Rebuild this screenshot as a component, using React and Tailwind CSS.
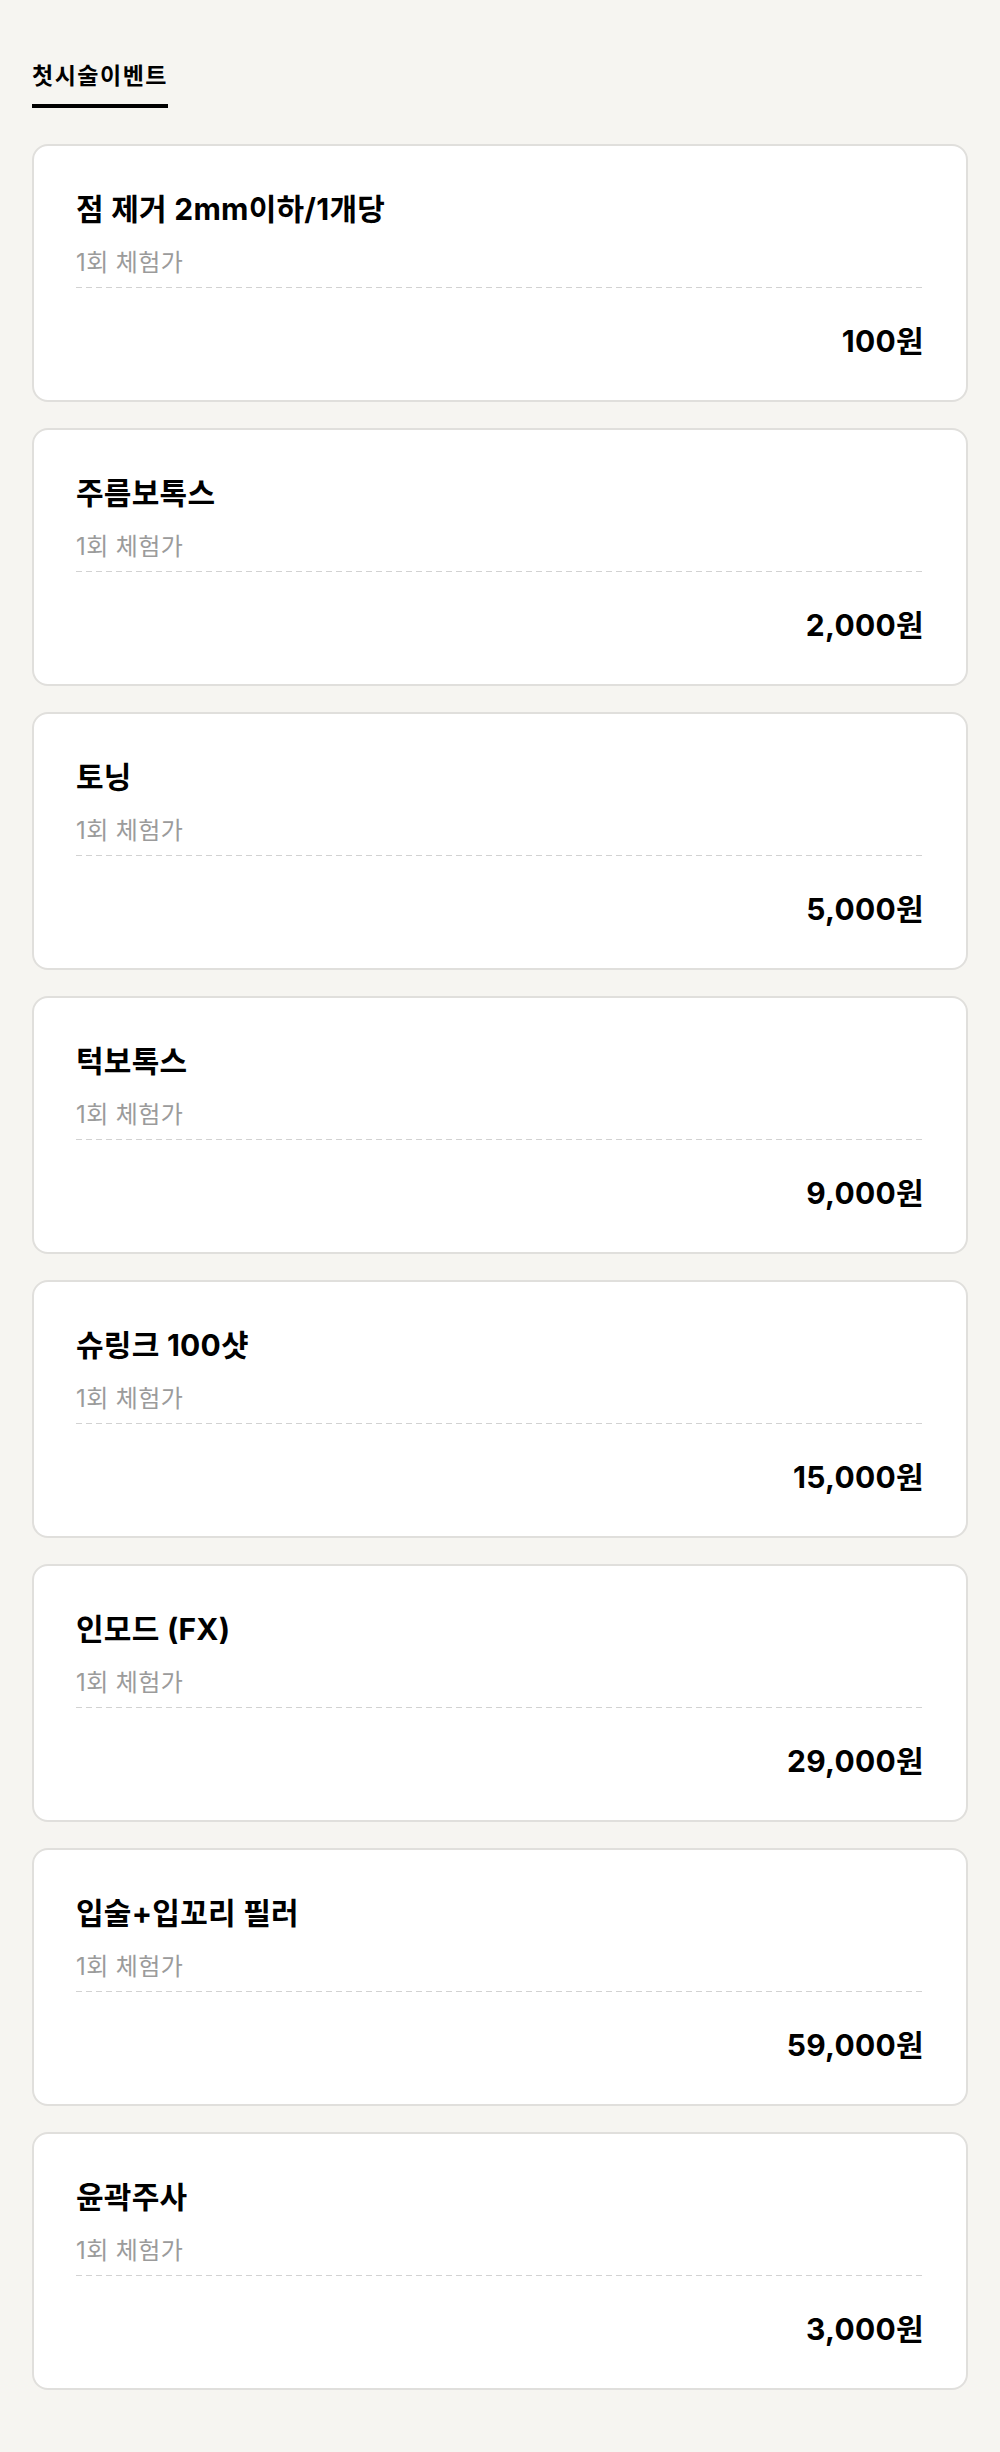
import React from "react";

const items = [
  { title: "점 제거 2mm이하/1개당", price: "100원" },
  { title: "주름보톡스", price: "2,000원" },
  { title: "토닝", price: "5,000원" },
  { title: "턱보톡스", price: "9,000원" },
  { title: "슈링크 100샷", price: "15,000원" },
  { title: "인모드 (FX)", price: "29,000원" },
  { title: "입술+입꼬리 필러", price: "59,000원" },
  { title: "윤곽주사", price: "3,000원" },
];

export default function App() {
  return (
    <div
      className="min-h-[2452px] bg-[#f6f5f1] px-8 pt-[60px] pb-[61px] text-black"
      style={{ fontFamily: 'Inter, "Noto Sans CJK KR", sans-serif' }}
    >
      <div className="flex">
        <h2 className="border-b-4 border-black pb-[11px] text-[23px] font-bold leading-[33px] tracking-[1.5px]">
          첫시술이벤트
        </h2>
      </div>
      <div className="mt-[36px] flex flex-col gap-[26px]">
        {items.map((it) => (
          <div
            key={it.title}
            className="rounded-[16px] border-2 border-[#e0dfdc] bg-white px-[42px] pt-[42px] pb-[38px]"
          >
            <div className="text-[30px] font-bold leading-[42px] tracking-[0.25px]">
              {it.title}
            </div>
            <div className="mt-[16px] text-[24px] leading-[33px] tracking-[0.4px] text-[#9b9b9b]">
              1회 체험가
            </div>
            <div className="mt-[8px] h-px bg-[repeating-linear-gradient(to_right,#d2d2d2_0px,#d2d2d2_6px,transparent_6px,transparent_10px)]" />
            <div className="mt-[32px] text-right text-[30px] font-bold leading-[42px] tracking-[0.3px]">
              {it.price}
            </div>
          </div>
        ))}
      </div>
    </div>
  );
}
